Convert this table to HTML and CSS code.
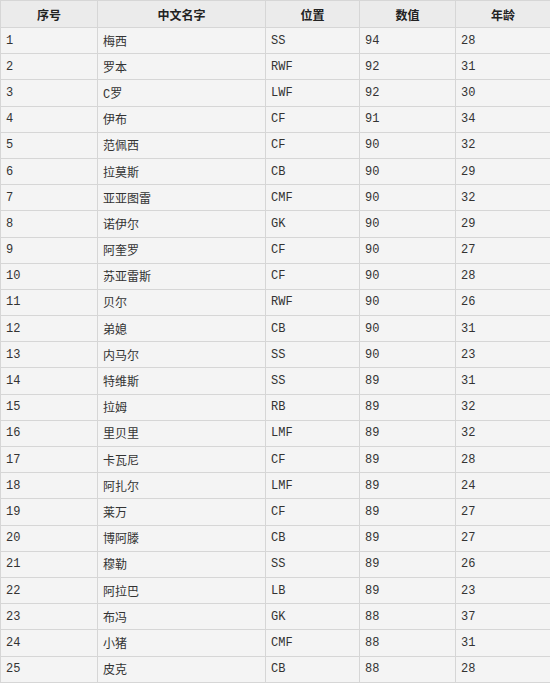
FILE: index.html
```html
<!DOCTYPE html>
<html lang="zh">
<head>
<meta charset="utf-8">
<link rel="stylesheet" href="styles.css">
</head>
<body>
<table class="tbl">
<colgroup><col class="c1"><col class="c2"><col class="c3"><col class="c4"><col class="c5"></colgroup>
<thead>
<tr><th>序号</th><th>中文名字</th><th>位置</th><th>数值</th><th>年龄</th></tr>
</thead>
<tbody>
<tr><td>1</td><td>梅西</td><td>SS</td><td>94</td><td>28</td></tr>
<tr><td>2</td><td>罗本</td><td>RWF</td><td>92</td><td>31</td></tr>
<tr><td>3</td><td>C罗</td><td>LWF</td><td>92</td><td>30</td></tr>
<tr><td>4</td><td>伊布</td><td>CF</td><td>91</td><td>34</td></tr>
<tr><td>5</td><td>范佩西</td><td>CF</td><td>90</td><td>32</td></tr>
<tr><td>6</td><td>拉莫斯</td><td>CB</td><td>90</td><td>29</td></tr>
<tr><td>7</td><td>亚亚图雷</td><td>CMF</td><td>90</td><td>32</td></tr>
<tr><td>8</td><td>诺伊尔</td><td>GK</td><td>90</td><td>29</td></tr>
<tr><td>9</td><td>阿奎罗</td><td>CF</td><td>90</td><td>27</td></tr>
<tr><td>10</td><td>苏亚雷斯</td><td>CF</td><td>90</td><td>28</td></tr>
<tr><td>11</td><td>贝尔</td><td>RWF</td><td>90</td><td>26</td></tr>
<tr><td>12</td><td>弟媳</td><td>CB</td><td>90</td><td>31</td></tr>
<tr><td>13</td><td>内马尔</td><td>SS</td><td>90</td><td>23</td></tr>
<tr><td>14</td><td>特维斯</td><td>SS</td><td>89</td><td>31</td></tr>
<tr><td>15</td><td>拉姆</td><td>RB</td><td>89</td><td>32</td></tr>
<tr><td>16</td><td>里贝里</td><td>LMF</td><td>89</td><td>32</td></tr>
<tr><td>17</td><td>卡瓦尼</td><td>CF</td><td>89</td><td>28</td></tr>
<tr><td>18</td><td>阿扎尔</td><td>LMF</td><td>89</td><td>24</td></tr>
<tr><td>19</td><td>莱万</td><td>CF</td><td>89</td><td>27</td></tr>
<tr><td>20</td><td>博阿滕</td><td>CB</td><td>89</td><td>27</td></tr>
<tr><td>21</td><td>穆勒</td><td>SS</td><td>89</td><td>26</td></tr>
<tr><td>22</td><td>阿拉巴</td><td>LB</td><td>89</td><td>23</td></tr>
<tr><td>23</td><td>布冯</td><td>GK</td><td>88</td><td>37</td></tr>
<tr><td>24</td><td>小猪</td><td>CMF</td><td>88</td><td>31</td></tr>
<tr><td>25</td><td>皮克</td><td>CB</td><td>88</td><td>28</td></tr>
</tbody>
</table>
</body>
</html>
```
FILE: styles.css
```css
html, body {
  margin: 0;
  padding: 0;
  background: #ffffff;
}
.tbl {
  width: 550px;
  border-collapse: collapse;
  table-layout: fixed;
  font-family: "Liberation Mono", "Noto Sans CJK SC", monospace;
  font-size: 12px;
  color: #333333;
  background: #f4f4f4;
  border: 1px solid #dadada;
}
.c1 { width: 97px; }
.c2 { width: 168px; }
.c3 { width: 94px; }
.c4 { width: 96px; }
.c5 { width: 95px; }
.tbl th {
  height: 27px;
  padding: 0;
  background: #ebebeb;
  font-family: "Noto Sans CJK SC", sans-serif;
  font-weight: bold;
  font-size: 12px;
  color: #222222;
  text-align: center;
  border: 1px solid #d6d6d6;
  box-sizing: border-box;
}
.tbl td {
  height: 26.2px;
  padding: 0 0 0 5px;
  text-align: left;
  vertical-align: middle;
  border: 1px solid #d6d6d6;
  box-sizing: border-box;
  white-space: nowrap;
}
```
